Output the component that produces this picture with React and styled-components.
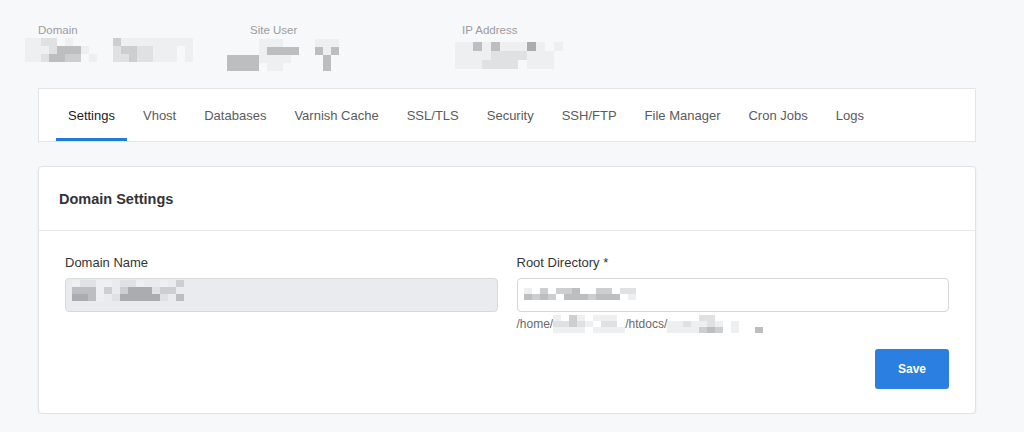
import React from "react";
import styled, { createGlobalStyle } from "styled-components";

const GlobalStyle = createGlobalStyle`
  body {
    margin: 0;
    background: #f7f8fa;
    font-family: "Liberation Sans", Arial, Helvetica, sans-serif;
  }
`;

const SHADES = {
  1: "#eeeff1",
  2: "#e0e1e3",
  3: "#cdced0",
  4: "#bdbec0",
  5: "#abacae",
};

// pixelated (redacted) values, drawn as a mosaic of grey cells
const Mosaic = ({ rows, cw = 8, ch = 8, $dx = 0, $dy = 0 }) => {
  const cols = Math.max(...rows.map((r) => r.length));
  return (
    <MosaicBox $dx={$dx} $dy={$dy}>
      <svg width={cols * cw} height={rows.length * ch}>
        {rows.map((row, y) =>
          row.split("").map((c, x) =>
            SHADES[c] ? (
              <rect key={`${x}-${y}`} x={x * cw} y={y * ch} width={cw} height={ch} fill={SHADES[c]} />
            ) : null
          )
        )}
      </svg>
    </MosaicBox>
  );
};

const TABS = [
  "Settings",
  "Vhost",
  "Databases",
  "Varnish Cache",
  "SSL/TLS",
  "Security",
  "SSH/FTP",
  "File Manager",
  "Cron Jobs",
  "Logs",
];

export default function App() {
  return (
    <>
      <GlobalStyle />
      <Page>
        <InfoRow>
          <InfoItem>
            <InfoLabel>Domain</InfoLabel>
            <Mosaic
              $dx={-13}
              $dy={1}
              rows={[
                "1122.1.....3111111111",
                "11124441...23322111.1",
                "1124433.1..22322111.1",
              ]}
            />
          </InfoItem>
          <InfoItem>
            <InfoLabel>Site User</InfoLabel>
            <Mosaic
              $dx={-23}
              $dy={2}
              rows={[
                "....111....111",
                "....14444..414",
                "44441111....4.",
                "4444.11.....4.",
              ]}
            />
          </InfoItem>
          <InfoItem>
            <InfoLabel>IP Address</InfoLabel>
            <Mosaic
              $dx={-7}
              $dy={5}
              cw={9}
              ch={9}
              rows={["1141411151.1", "11112222111", "1112222.111"]}
            />
          </InfoItem>
        </InfoRow>

        <TabBar>
          {TABS.map((t, i) => (
            <Tab key={t} $active={i === 0}>
              {t}
            </Tab>
          ))}
        </TabBar>

        <Card>
          <CardHeader>
            <CardTitle>Domain Settings</CardTitle>
          </CardHeader>
          <CardBody>
            <FormGrid>
              <Field>
                <Label>Domain Name</Label>
                <InputBox $disabled>
                  <Mosaic
                    $dy={1}
                    ch={7}
                    rows={["12211.221..1.3", "44413.3555233.", "5541.2555552.4"]}
                  />
                </InputBox>
              </Field>
              <Field>
                <Label>Root Directory *</Label>
                <InputBox>
                  <Mosaic
                    $dy={9}
                    ch={6}
                    rows={["1.3.334..33.22", "4343.4443444.1"]}
                  />
                </InputBox>
                <Help>
                  /home/
                  <Mosaic ch={6} rows={["1.31.111.", "22321.22.", "1111.1111"]} />
                  /htdocs/
                  <Mosaic
                    ch={6}
                    rows={["....22.......", "1121121.1....", "1111343.1..4."]}
                  />
                </Help>
              </Field>
            </FormGrid>
            <Actions>
              <SaveButton>Save</SaveButton>
            </Actions>
          </CardBody>
        </Card>
      </Page>
    </>
  );
}

const Page = styled.div`
  padding: 0 48px 0 38px;
`;

const InfoRow = styled.div`
  display: grid;
  grid-template-columns: repeat(3, 212px);
  height: 88px;
  padding-top: 23px;
  box-sizing: border-box;
`;

const InfoItem = styled.div`
  display: flex;
  flex-direction: column;
  align-items: flex-start;
`;

const InfoLabel = styled.div`
  font-size: 11.5px;
  line-height: 14px;
  color: #9b9c9e;
`;

const MosaicBox = styled.span`
  display: inline-flex;
  margin-left: ${({ $dx }) => $dx}px;
  margin-top: ${({ $dy }) => $dy}px;

  svg {
    display: block;
  }
`;

const TabBar = styled.div`
  display: flex;
  gap: 4px;
  height: 54px;
  padding: 0 17px;
  box-sizing: border-box;
  background: #fff;
  border: 1px solid #e3e5e8;
`;

const Tab = styled.div`
  display: flex;
  align-items: center;
  padding: 3px 12px 0;
  font-size: 13px;
  color: ${({ $active }) => ($active ? "#1f2022" : "#5a5b5d")};
  border-bottom: 3px solid ${({ $active }) => ($active ? "#1f7bd8" : "transparent")};
  cursor: pointer;
`;

const Card = styled.div`
  margin-top: 24px;
  background: #fff;
  border: 1px solid #e1e3e6;
  border-radius: 4px;
  box-shadow: 0 1px 3px rgba(0, 0, 0, 0.06);
`;

const CardHeader = styled.div`
  display: flex;
  align-items: center;
  height: 63px;
  padding: 0 20px;
  border-bottom: 1px solid #e6e8eb;
`;

const CardTitle = styled.h2`
  margin: 0;
  font-size: 14.5px;
  font-weight: bold;
  color: #333436;
`;

const CardBody = styled.div`
  padding: 24px 26px;
`;

const FormGrid = styled.div`
  display: grid;
  grid-template-columns: 1fr 1fr;
  gap: 19px;
  align-items: start;
`;

const Field = styled.div`
  display: flex;
  flex-direction: column;
`;

const Label = styled.label`
  margin-bottom: 7px;
  font-size: 13px;
  line-height: 16px;
  color: #343538;
`;

const InputBox = styled.div`
  display: flex;
  align-items: flex-start;
  height: 34px;
  padding: 0 6px;
  box-sizing: border-box;
  border: 1px solid ${({ $disabled }) => ($disabled ? "#d6d9dd" : "#d3d6da")};
  border-radius: 4px;
  background: ${({ $disabled }) => ($disabled ? "#e9ebee" : "#fff")};
`;

const Help = styled.div`
  display: flex;
  align-items: center;
  margin-top: 5px;
  height: 14px;
  font-size: 12px;
  color: #68696b;
`;

const Actions = styled.div`
  display: flex;
  justify-content: flex-end;
  margin-top: 18px;
`;

const SaveButton = styled.button`
  width: 74px;
  height: 40px;
  border: none;
  border-radius: 3px;
  background: #2a7fe0;
  color: #fff;
  font-family: inherit;
  font-size: 12px;
  font-weight: bold;
  cursor: pointer;
`;
